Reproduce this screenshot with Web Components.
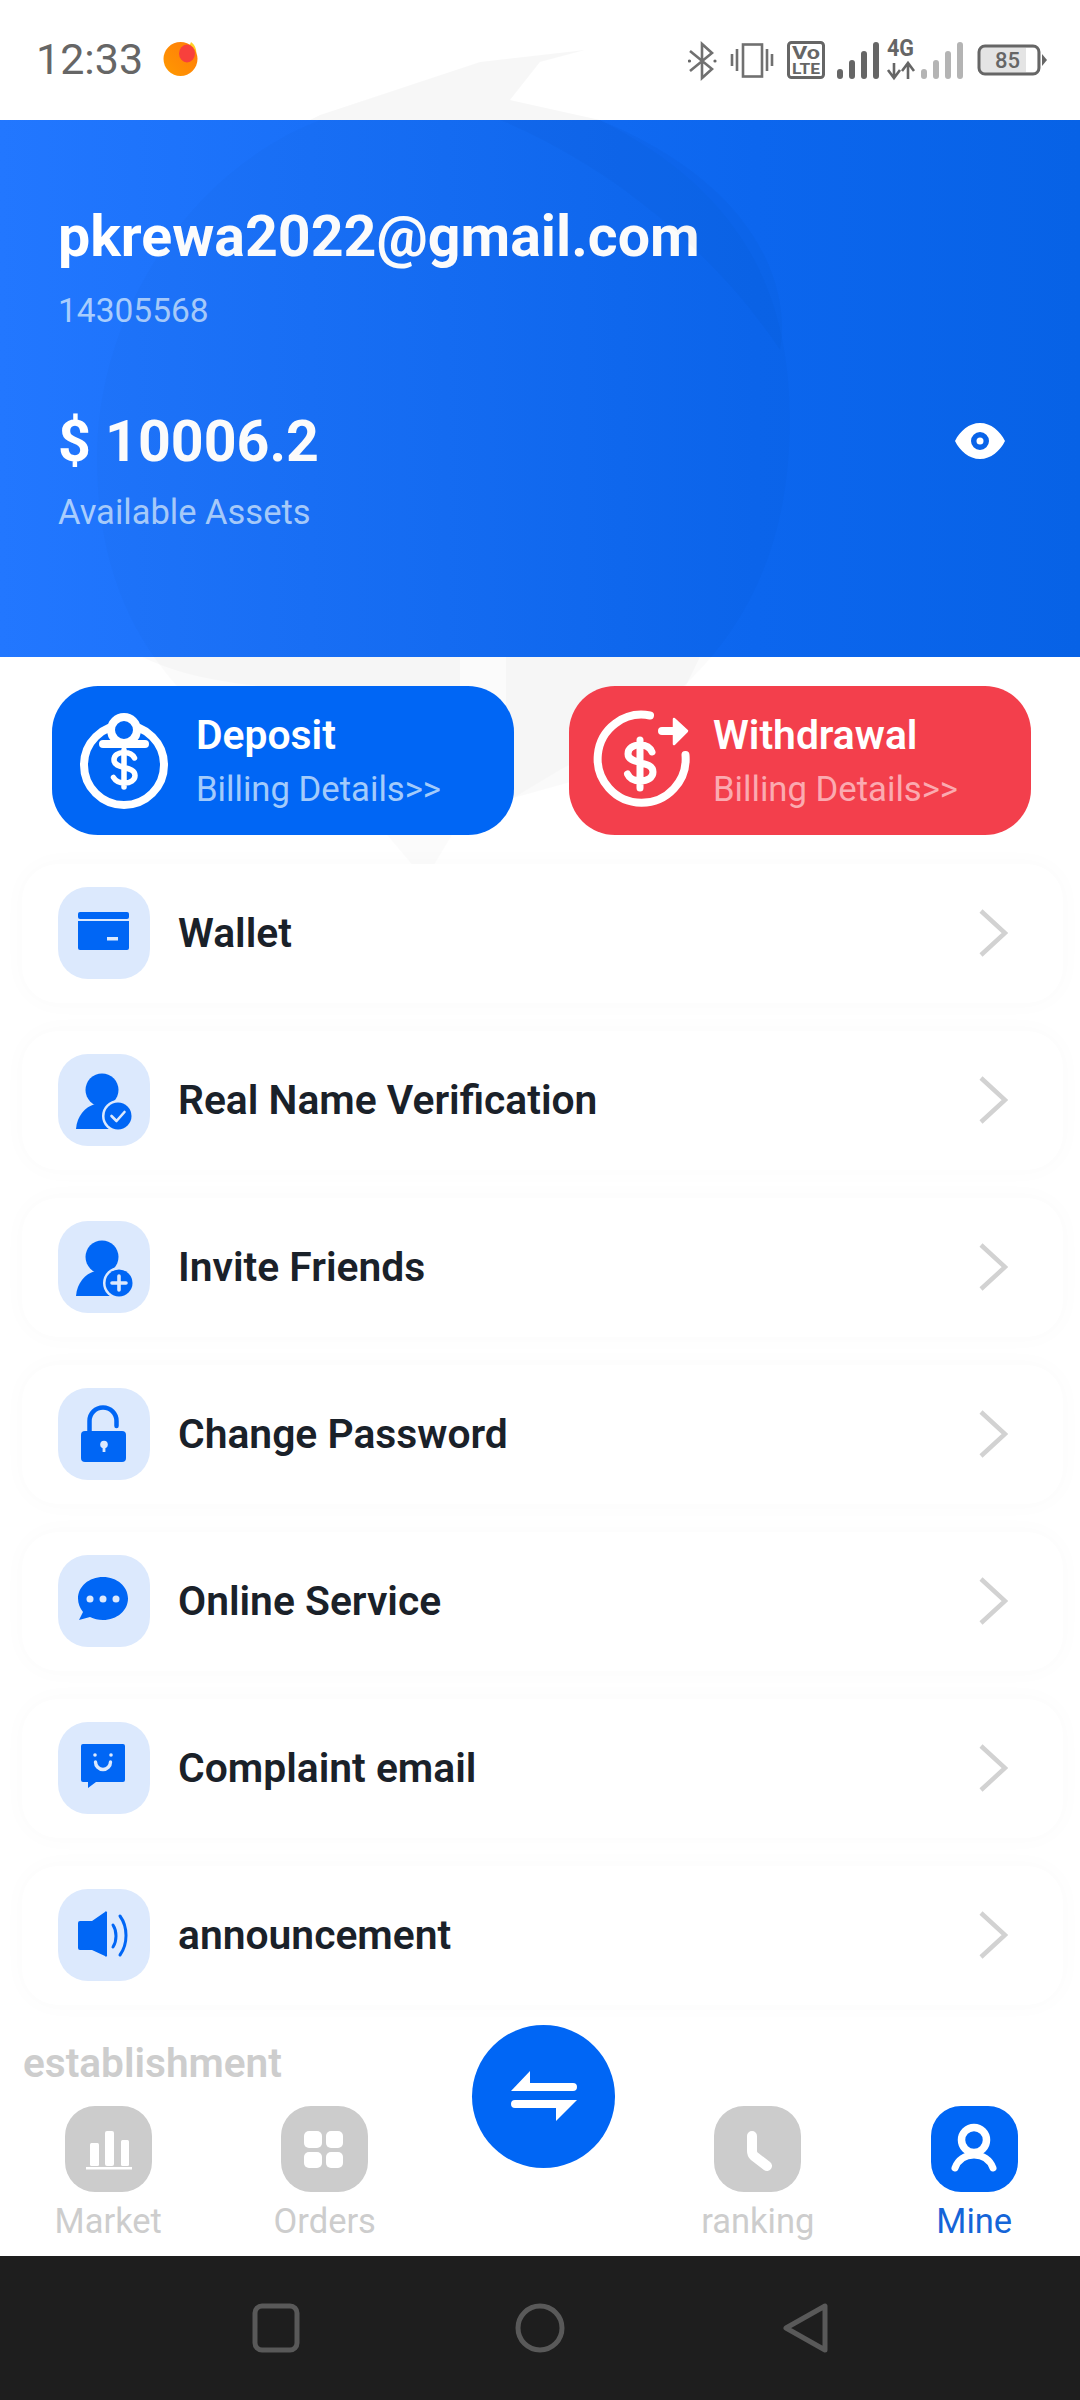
<!DOCTYPE html>
<html lang="en">
<head>
<meta charset="utf-8">
<title>Mine</title>
<style>
  html, body { margin: 0; padding: 0; background: #fff; }
  body { width: 1080px; height: 2400px; overflow: hidden; font-family: Roboto, "Liberation Sans", sans-serif; }
</style>
</head>
<body>
<app-screen>
  <status-bar time="12:33"></status-bar>
  <account-header email="pkrewa2022@gmail.com" uid="14305568" amount="$ 10006.2" label="Available Assets"></account-header>
  <water-mark></water-mark>
  <action-row>
    <action-button kind="deposit" title-text="Deposit" sub="Billing Details&gt;&gt;"></action-button>
    <action-button kind="withdraw" title-text="Withdrawal" sub="Billing Details&gt;&gt;"></action-button>
  </action-row>
  <menu-list>
    <menu-row icon="wallet">Wallet</menu-row>
    <menu-row icon="verify">Real Name Verification</menu-row>
    <menu-row icon="invite">Invite Friends</menu-row>
    <menu-row icon="lock">Change Password</menu-row>
    <menu-row icon="chat">Online Service</menu-row>
    <menu-row icon="smile">Complaint email</menu-row>
    <menu-row icon="sound">announcement</menu-row>
  </menu-list>
  <section-title>establishment</section-title>
  <bottom-nav>
    <nav-item icon="market">Market</nav-item>
    <nav-item icon="orders">Orders</nav-item>
    <span></span>
    <nav-item icon="ranking">ranking</nav-item>
    <nav-item icon="mine" active>Mine</nav-item>
  </bottom-nav>
  <system-bar></system-bar>
</app-screen>

<script>
const BLUE = '#0066f5';
const TILE = '#dce9fd';

const ROW_ICONS = {
  wallet: `<rect x="20" y="25" width="51" height="7" rx="2" fill="${BLUE}"/>
    <path d="M20 34h51v27a2 2 0 0 1-2 2H22a2 2 0 0 1-2-2z" fill="${BLUE}"/>
    <rect x="49" y="50" width="11" height="3.5" fill="${TILE}"/>`,
  verify: `<circle cx="44" cy="36" r="16.5" fill="${BLUE}"/>
    <path d="M18 75c1-13 9-22 19-25h14c5 2 9 4 12 8L52 75z" fill="${BLUE}"/>
    <circle cx="60" cy="62" r="16" fill="${TILE}"/><circle cx="60" cy="62" r="13.5" fill="${BLUE}"/>
    <path d="M53.5 62l5 5 8-9" fill="none" stroke="#dce9fd" stroke-width="2.6" stroke-linecap="round" stroke-linejoin="round"/>`,
  invite: `<circle cx="44" cy="36" r="16.5" fill="${BLUE}"/>
    <path d="M18 75c1-13 9-22 19-25h14c5 2 9 4 12 8L52 75z" fill="${BLUE}"/>
    <circle cx="61" cy="62" r="16" fill="${TILE}"/><circle cx="61" cy="62" r="13.5" fill="${BLUE}"/>
    <path d="M61 55v14M54 62h14" stroke="#dce9fd" stroke-width="3.6" stroke-linecap="round"/>`,
  lock: `<path d="M31.5 44V33a13.5 13.5 0 0 1 27 0v5" fill="none" stroke="${BLUE}" stroke-width="4.5" stroke-linecap="round"/>
    <rect x="23" y="43" width="45" height="31" rx="4" fill="${BLUE}"/>
    <circle cx="46" cy="56.5" r="3.8" fill="${TILE}"/><rect x="44.6" y="57" width="2.8" height="7" fill="${TILE}"/>`,
  chat: `<path d="M45 22c14 0 25 9.500 25 21.500S59 65 45 65c-5 0-9-1-13-3l-11 3 4-8c-3-4-5-8-5-13.500C20 31.500 31 22 45 22z" fill="${BLUE}"/>
    <circle cx="32" cy="44" r="3.500" fill="${TILE}"/><circle cx="45" cy="44" r="3.500" fill="${TILE}"/><circle cx="58" cy="44" r="3.500" fill="${TILE}"/>`,
  smile: `<path d="M25 22h40a2 2 0 0 1 2 2v34a2 2 0 0 1-2 2H38l-8 6v-6h-5a2 2 0 0 1-2-2V24a2 2 0 0 1 2-2z" fill="${BLUE}"/>
    <circle cx="37" cy="33" r="1.800" fill="${TILE}"/><circle cx="53" cy="33" r="1.800" fill="${TILE}"/>
    <path d="M37.500 40a7.500 7.500 0 0 0 15 0" fill="none" stroke="${TILE}" stroke-width="3.400" stroke-linecap="round"/>`,
  sound: `<path d="M22 32h12l13-9a1 1 0 0 1 2 1v42a1 1 0 0 1-2 1L34 61H22a2 2 0 0 1-2-2V34a2 2 0 0 1 2-2z" fill="${BLUE}"/>
    <path d="M55 36c4 6 4 16 0 22M62 27c8 11 8 28 0 39" fill="none" stroke="${BLUE}" stroke-width="3" stroke-linecap="round"/>`
};

const NAV_ICONS = {
  market: `<rect x="25" y="37" width="9" height="23" rx="1.500" fill="#fff"/><rect x="40" y="25" width="9" height="35" rx="2" fill="#fff"/><rect x="56" y="34" width="8" height="26" rx="1.500" fill="#fff"/><rect x="21" y="61" width="46" height="2.500" fill="#fff"/>`,
  orders: `<rect x="23" y="25" width="18" height="17" rx="5" fill="#fff"/><rect x="45" y="25" width="17" height="17" rx="5" fill="#fff"/><rect x="23" y="46" width="18" height="16" rx="5" fill="#fff"/><rect x="45" y="46" width="17" height="16" rx="5" fill="#fff"/>`,
  ranking: `<path d="M38 30v15c0 2 1 4 2 5l13 10" fill="none" stroke="#fff" stroke-width="10" stroke-linecap="round" stroke-linejoin="round"/>`,
  mine: `<circle cx="43" cy="34" r="12.500" fill="none" stroke="#fff" stroke-width="7.500"/><path d="M24 62c3-8 10-13 19-13s16 5 19 13" fill="none" stroke="#fff" stroke-width="7" stroke-linecap="round"/>`
};

class AppScreen extends HTMLElement {
  constructor() {
    super();
    this.attachShadow({ mode: 'open' });
    this.shadowRoot.innerHTML = `
      <style>
        :host { display: flex; flex-direction: column; position: relative; width: 1080px; height: 2400px; background: #fff; overflow: hidden; }
      </style>
      <slot></slot>`;
  }
}

class StatusBar extends HTMLElement {
  constructor() {
    super();
    this.attachShadow({ mode: 'open' });
  }

  connectedCallback() {
    this.shadowRoot.innerHTML = `
      <style>
        :host { display: flex; flex: none; align-items: center; height: 120px; padding: 0 30px 0 36px; color: #666; }
        .time { font: 400 43px Roboto, sans-serif; margin-top: -3px; }
        .dot { width: 35px; height: 35px; margin: -3px 0 0 20px; }
        .icons { margin-left: auto; width: 362px; height: 64px; margin-top: -2px; }
        text { font-family: Roboto, sans-serif; font-weight: 700; fill: #666; }
      </style>
      <span class="time">${this.getAttribute('time')}</span>
      <svg class="dot" viewBox="0 0 35 35">
        <defs><linearGradient id="o" x1="0" y1="1" x2="1" y2="0"><stop offset="0" stop-color="#ff9a00"/><stop offset="1" stop-color="#ff7a0a"/></linearGradient></defs>
        <path d="M28 1c4 3 6 8 5 12L26 6z" fill="#ffd028"/>
        <circle cx="17.500" cy="18" r="17" fill="url(#o)"/>
        <ellipse cx="24" cy="12.500" rx="8" ry="9" fill="#f8403c"/>
      </svg>
      <svg class="icons" viewBox="688 26 362 64">
        <g fill="none" stroke="#707070" stroke-width="2.600">
          <path d="M690 50l22 18-10 9V43l10 9-22 18"/>
          <rect x="743" y="43.500" width="19" height="32"/>
          <path d="M732 53v12M737 48v22M767 48v22M772 53v12"/>
          <rect x="788.500" y="41.500" width="35" height="35" rx="3" stroke-width="3" stroke="#666"/>
        </g>
        <circle cx="689.500" cy="60" r="1.600" fill="#666"/><circle cx="715" cy="60" r="1.600" fill="#666"/>
        <text x="792" y="58" font-size="18" textLength="28" lengthAdjust="spacingAndGlyphs">Vo</text>
        <text x="792" y="73" font-size="15" textLength="28" lengthAdjust="spacingAndGlyphs">LTE</text>
        <g stroke="#666" stroke-width="6" stroke-linecap="round">
          <path d="M840 71v4M852 62v13M864 53v22M876 44v31"/>
        </g>
        <text x="887" y="55" font-size="23" textLength="27" lengthAdjust="spacingAndGlyphs">4G</text>
        <path d="M894 62v14M888 69l6 8 6-8" fill="none" stroke="#666" stroke-width="2.600"/>
        <path d="M908 78V63M902 70l6-8 6 8" fill="none" stroke="#666" stroke-width="2.600"/>
        <g stroke="#b4b4b4" stroke-width="6" stroke-linecap="round">
          <path d="M924 71v4M936 62v13M948 53v22M960 44v31"/>
        </g>
        <rect x="980" y="46" width="58" height="26" rx="4" fill="#e4e4e4"/>
        <rect x="1026" y="47" width="11" height="24" fill="#fff"/>
        <rect x="979" y="45" width="60" height="28" rx="6" fill="none" stroke="#666" stroke-width="3"/>
        <path d="M1042 53l5 6-5 6z" fill="#666"/>
        <text x="995" y="67" font-size="22" style="font-weight:500">85</text>
      </svg>`;
  }
}

class AccountHeader extends HTMLElement {
  constructor() {
    super();
    this.attachShadow({ mode: 'open' });
  }

  connectedCallback() {
    this.shadowRoot.innerHTML = `
      <style>
        :host { display: flex; flex: none; flex-direction: column; position: relative; z-index: 0; height: 537px; box-sizing: border-box; padding: 82px 75px 0 58px; color: #fff; background: linear-gradient(90deg, #2277ff 0%, #0c66ee 70%, #0762e6 100%); }
        .email { font-size: 57.300px; font-weight: 700; line-height: 70px; }
        .uid { font-size: 33.500px; line-height: 40px; margin-top: 19px; color: #a8cdfd; }
        .bottom { display: flex; align-items: center; justify-content: space-between; margin-top: 78px; }
        .amount { font-size: 57.300px; font-weight: 700; line-height: 66px; }
        .label { font-size: 34.500px; line-height: 40px; margin-top: 17px; color: #a8cdfd; }
        svg { width: 50px; height: 36px; margin-top: -2px; }
      </style>
      <div class="email">${this.getAttribute('email')}</div>
      <div class="uid">${this.getAttribute('uid')}</div>
      <div class="bottom">
        <div class="amount">${this.getAttribute('amount')}</div>
        <svg viewBox="0 0 50 36"><path fill-rule="evenodd" fill="#fff" d="M25 0c11 0 20 8 25 18-5 10-14 18-25 18S5 28 0 18C5 8 14 0 25 0zm0 9a9 9 0 1 0 0 18 9 9 0 0 0 0-18z"/><circle cx="25" cy="18" r="3.500" fill="#fff"/></svg>
      </div>
      <div class="label">${this.getAttribute('label')}</div>`;
  }
}

// faint logo behind the page
class WaterMark extends HTMLElement {
  constructor() {
    super();
    this.attachShadow({ mode: 'open' });
    this.shadowRoot.innerHTML = `
      <style>
        :host { display: block; position: absolute; left: 0; top: 0; width: 1080px; height: 900px; z-index: 1; pointer-events: none; }
        svg { width: 100%; height: 100%; display: block; }
      </style>
      <svg viewBox="0 0 1080 900">
        <path fill="#000" opacity=".014" d="M320 120C190 170 100 310 97 450 95 560 130 640 190 700L387 835 425 880 452 835 560 770C700 700 790 600 790 420 790 290 740 190 600 120z"/>
        <path fill="#000" opacity=".03" d="M585 50L480 62 320 115 310 120 600 120 510 100 540 62z"/>
        <path fill="#000" opacity=".02" d="M500 120C620 170 720 260 780 350 790 300 770 190 600 120zM142 657L460 657 460 686 260 686C200 680 170 670 142 657zM506 657L700 657 650 760 506 800z"/>
      </svg>`;
  }
}

class ActionRow extends HTMLElement {
  constructor() {
    super();
    this.attachShadow({ mode: 'open' });
    this.shadowRoot.innerHTML = `
      <style>
        :host { display: flex; flex: none; justify-content: space-between; position: relative; z-index: 2; padding: 29px 49px 0 52px; }
      </style>
      <slot></slot>`;
  }
}

class ActionButton extends HTMLElement {
  constructor() {
    super();
    this.attachShadow({ mode: 'open' });
  }

  connectedCallback() {
    const deposit = this.getAttribute('kind') === 'deposit';
    const icon = deposit
      ? `<circle cx="72" cy="79" r="40" fill="none" stroke="#fff" stroke-width="8"/>
         <circle cx="72" cy="44" r="13" fill="${BLUE}" stroke="#fff" stroke-width="8"/>
         <rect x="47" y="54" width="50" height="8" rx="4" fill="#fff"/>
         <path d="M82.500 72c-2-4-5.500-5.500-10.500-5.500-6 0-10 3-10 7.500 0 10 21 5 21 15.500 0 4.500-4.500 7.500-10.500 7.500-5 0-9-2-11-5.500M72 64v37" fill="none" stroke="#fff" stroke-width="5.500" stroke-linecap="round"/>`
      : `<path d="M81 29.500A44 44 0 1 0 116.500 69" fill="none" stroke="#fff" stroke-width="8" stroke-linecap="round"/>
         <path d="M93 45h14" stroke="#fff" stroke-width="8" stroke-linecap="round"/>
         <path d="M105 33l13 12-13 13z" fill="#fff" stroke="#fff" stroke-width="2.500" stroke-linejoin="round"/>
         <path d="M83 66c-2-5-7-7-12-7-7 0-12 3.500-12 9 0 11 25 6 25 18 0 5.500-5.500 9-12.500 9-6 0-11-2.500-13-7M71 54v48" fill="none" stroke="#fff" stroke-width="7" stroke-linecap="round"/>`;
    this.shadowRoot.innerHTML = `
      <style>
        :host { display: flex; width: 462px; height: 149px; border-radius: 46px; color: #fff; background: ${deposit ? BLUE : '#f33f4c'}; }
        svg { width: 145px; height: 149px; flex: none; margin-right: -1px; }
        .text { display: flex; flex-direction: column; padding-top: 26px; }
        .title { font-size: 40.800px; font-weight: 600; line-height: 46px; }
        .sub { font-size: 34.700px; line-height: 46px; margin-top: 8px; color: ${deposit ? '#a3cbfb' : '#fbaab0'}; }
      </style>
      <svg viewBox="0 0 145 149">${icon}</svg>
      <div class="text">
        <span class="title">${this.getAttribute('title-text')}</span>
        <span class="sub">${this.getAttribute('sub')}</span>
      </div>`;
  }
}

class MenuList extends HTMLElement {
  constructor() {
    super();
    this.attachShadow({ mode: 'open' });
    this.shadowRoot.innerHTML = `
      <style>
        :host { display: flex; flex: none; flex-direction: column; gap: 28px; position: relative; z-index: 2; margin: 28.500px 17px 0 22px; }
      </style>
      <slot></slot>`;
  }
}

class MenuRow extends HTMLElement {
  constructor() {
    super();
    this.attachShadow({ mode: 'open' });
  }

  connectedCallback() {
    this.shadowRoot.innerHTML = `
      <style>
        :host { display: flex; align-items: center; height: 139px; padding: 0 55px 0 36px; border-radius: 36px; background: #fff; box-shadow: 0 0 24px rgba(0, 0, 0, .022); color: #1a2129; }
        .tile { width: 92px; height: 92px; flex: none; border-radius: 30px; background: ${TILE}; }
        svg { display: block; }
        .name { flex: 1; margin-left: 28px; font-size: 40.800px; font-weight: 600; }
      </style>
      <div class="tile"><svg width="92" height="92" viewBox="0 0 92 92">${ROW_ICONS[this.getAttribute('icon')]}</svg></div>
      <span class="name"><slot></slot></span>
      <svg width="30" height="48" viewBox="0 0 30 48"><path d="M3 2l24 22L3 46" fill="none" stroke="#d2d2d2" stroke-width="4.500"/></svg>`;
  }
}

class SectionTitle extends HTMLElement {
  constructor() {
    super();
    this.attachShadow({ mode: 'open' });
    this.shadowRoot.innerHTML = `
      <style>
        :host { display: block; flex: none; position: relative; z-index: 2; margin-top: 33px; padding-left: 23px; height: 50px; font-size: 40.600px; line-height: 50px; font-weight: 600; color: #cdcdcd; }
      </style>
      <slot></slot>`;
  }
}

class BottomNav extends HTMLElement {
  constructor() {
    super();
    this.attachShadow({ mode: 'open' });
    this.shadowRoot.innerHTML = `
      <style>
        :host { display: grid; flex: none; grid-template-columns: repeat(5, 216.500px); position: relative; margin-top: auto; height: 160px; z-index: 3; background: #fff; padding-top: 10px; box-sizing: border-box; }
        .fab { position: absolute; left: 472px; top: -71px; width: 143px; height: 143px; border-radius: 50%; background: ${BLUE}; }
        .fab svg { display: block; }
      </style>
      <slot></slot>
      <div class="fab">
        <svg width="143" height="143" viewBox="0 0 143 143" fill="#fff">
          <path d="M39 66L58 46v12h43a4 4 0 0 1 0 8z"/>
          <path d="M105 75L84 96V83H43a4 4 0 0 1 0-8z"/>
        </svg>
      </div>`;
  }
}

class NavItem extends HTMLElement {
  constructor() {
    super();
    this.attachShadow({ mode: 'open' });
  }

  connectedCallback() {
    const active = this.hasAttribute('active');
    this.shadowRoot.innerHTML = `
      <style>
        :host { display: flex; flex-direction: column; align-items: center; color: ${active ? '#1565d8' : '#cdcdcd'}; }
        .tile { width: 87px; height: 86px; border-radius: 30px; background: ${active ? BLUE : '#cccccc'}; }
        svg { display: block; }
        .label { font-size: 34.500px; line-height: 40px; margin-top: 9px; }
      </style>
      <div class="tile"><svg width="87" height="86" viewBox="0 0 87 86">${NAV_ICONS[this.getAttribute('icon')]}</svg></div>
      <span class="label"><slot></slot></span>`;
  }
}

class SystemBar extends HTMLElement {
  constructor() {
    super();
    this.attachShadow({ mode: 'open' });
    this.shadowRoot.innerHTML = `
      <style>
        :host { display: flex; flex: none; justify-content: center; align-items: center; gap: 204.500px; position: relative; height: 144px; z-index: 3; background: #1e1e1e; }
      </style>
      <svg width="60" height="60" viewBox="0 0 60 60" fill="none" stroke="#595959" stroke-width="5"><rect x="9" y="8" width="42" height="44" rx="7"/></svg>
      <svg width="60" height="60" viewBox="0 0 60 60" fill="none" stroke="#595959" stroke-width="5"><circle cx="30" cy="30" r="22"/></svg>
      <svg width="60" height="60" viewBox="0 0 60 60" fill="none" stroke="#595959" stroke-width="5" stroke-linejoin="round"><path d="M50 8v44L11 30z"/></svg>`;
  }
}

customElements.define('app-screen', AppScreen);
customElements.define('status-bar', StatusBar);
customElements.define('account-header', AccountHeader);
customElements.define('water-mark', WaterMark);
customElements.define('action-row', ActionRow);
customElements.define('action-button', ActionButton);
customElements.define('menu-list', MenuList);
customElements.define('menu-row', MenuRow);
customElements.define('section-title', SectionTitle);
customElements.define('bottom-nav', BottomNav);
customElements.define('nav-item', NavItem);
customElements.define('system-bar', SystemBar);
</script>
</body>
</html>
